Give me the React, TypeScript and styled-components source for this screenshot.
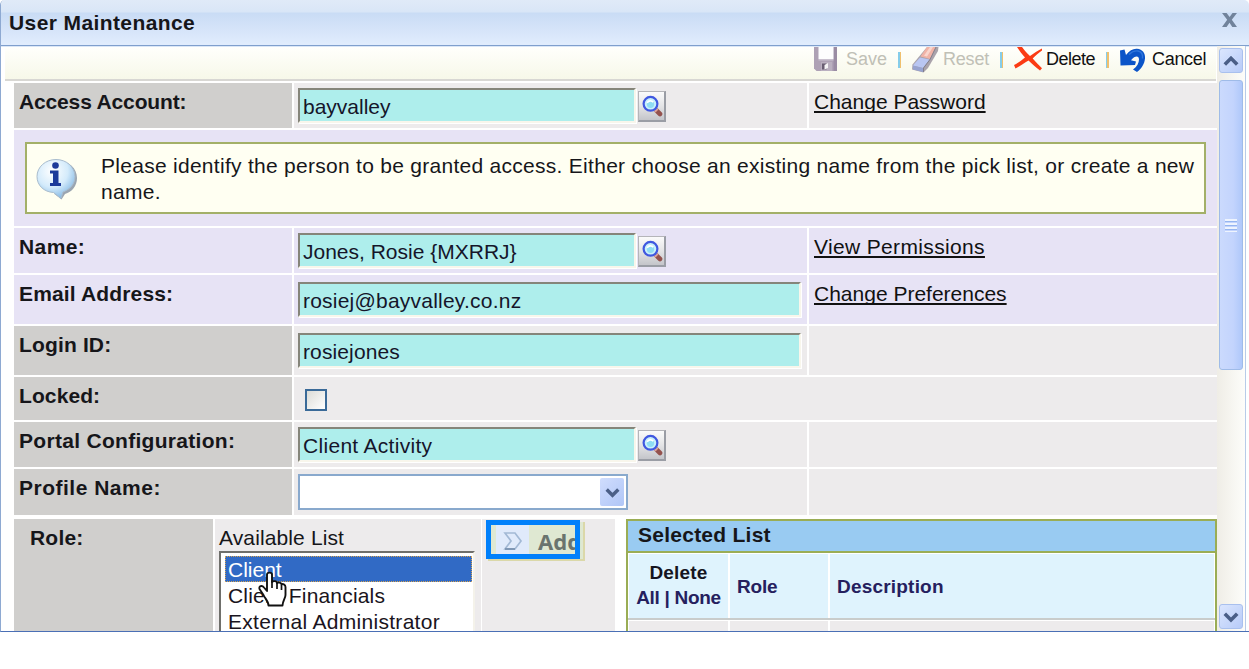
import React from 'react';
import styled, { createGlobalStyle } from 'styled-components';

const GlobalStyle = createGlobalStyle`
  * { box-sizing: border-box; }
  body {
    margin: 0;
    background: #fff;
    font-family: 'Liberation Sans', Arial, sans-serif;
    font-size: 21px;
    line-height: 24px;
    color: #16161a;
    overflow: hidden;
  }
`;

const Window = styled.div`
  width: 1249px;
  height: 632px;
  display: flex;
  flex-direction: column;
  background: #fff;
  border-left: 1px solid #8ea9d2;
  border-bottom: 1px solid #4a6fb5;
  border-radius: 5px 5px 0 0;
  overflow: hidden;
`;

const TitleBar = styled.header`
  flex: none;
  height: 46px;
  display: flex;
  align-items: center;
  justify-content: space-between;
  padding: 0 12px 1px 8px;
  border-bottom: 1px solid #7f9fcd;
  background: linear-gradient(#e0eaf8 0, #d9e6f7 12px, #c9dcf5 13px, #d3e2f8 26px, #e0ecfd 44px);
  box-shadow: 0 1px 0 #dbe7f7;
`;

const Title = styled.h1`
  margin: 1px 0 0;
  font-size: 21px;
  font-weight: bold;
  letter-spacing: 0.4px;
`;

const CloseIcon = styled.svg`
  width: 15px;
  height: 14px;
  margin-top: -5px;
`;

const Body = styled.div`
  flex: 1;
  min-height: 0;
  display: flex;
  overflow: hidden;
`;

const Content = styled.main`
  width: 1216px;
  padding: 1px 0 0 4px;
  overflow: hidden;
`;

const Toolbar = styled.nav`
  width: 1211px;
  height: 34px;
  display: flex;
  align-items: flex-start;
  padding-left: 809px;
  background: linear-gradient(#fffffc, #f7f8e9);
  border-bottom: 2px solid #d8d7d3;
`;

const Action = styled.div<{ $width: number; $gap: number; $muted?: boolean; $spacing?: number }>`
  flex: none;
  width: ${(p) => p.$width}px;
  display: flex;
  gap: ${(p) => p.$gap}px;
  font-size: 18px;
  line-height: 24px;
  letter-spacing: ${(p) => p.$spacing ?? 0}px;
  color: ${(p) => (p.$muted ? '#c0c0b6' : '#111')};
  white-space: nowrap;
`;

const ToolIcon = styled.svg`
  flex: none;
  height: 26px;
`;

const Divider = styled.span`
  flex: none;
  width: 3px;
  height: 16px;
  margin-top: 5px;
  background: linear-gradient(90deg, #86cdea 0 50%, #f0c06e 50%);
`;

const Form = styled.div`
  width: 1203px;
  margin: 2px 0 0 9px;
  display: flex;
  flex-direction: column;
  gap: 2px;
`;

type Tone = 'lavender' | 'grey';

const Row = styled.div<{ $height: number }>`
  flex: none;
  height: ${(p) => p.$height}px;
  display: flex;
  gap: 2px;
`;

const Label = styled.div<{ $tone: Tone; $spacing: number; $top: number }>`
  width: 278px;
  padding: ${(p) => p.$top}px 0 0 5px;
  font-weight: bold;
  letter-spacing: ${(p) => p.$spacing}px;
  background: ${(p) => (p.$tone === 'lavender' ? '#e7e3f5' : '#d0cfcd')};
`;

const Value = styled.div<{ $tone: Tone; $top: number; $wide?: boolean }>`
  width: ${(p) => (p.$wide ? 923 : 513)}px;
  display: flex;
  align-items: flex-start;
  padding: ${(p) => p.$top}px 0 0 4px;
  background: ${(p) => (p.$tone === 'lavender' ? '#e7e3f5' : '#edebec')};
`;

const LinkCell = styled.div<{ $tone: Tone }>`
  width: 408px;
  padding: 7px 0 0 5px;
  background: ${(p) => (p.$tone === 'lavender' ? '#e7e3f5' : '#edebec')};
`;

const Link = styled.a<{ $spacing: number }>`
  color: #111;
  letter-spacing: ${(p) => p.$spacing}px;
  text-decoration: underline;
  text-decoration-thickness: 1.5px;
  text-underline-offset: 2px;
  text-decoration-skip-ink: none;
`;

const Field = styled.div<{ $width: number; $spacing: number }>`
  width: ${(p) => p.$width}px;
  height: 35px;
  padding: 5px 0 0 3px;
  border: 2px solid;
  border-color: #85857a #f8f6ec #f8f6ec #85857a;
  background: #aeeeec;
  box-shadow: 1px 1px 0 #fff;
  line-height: 24px;
  letter-spacing: ${(p) => p.$spacing}px;
  color: #15152a;
  white-space: nowrap;
`;

const LookupButton = styled.button`
  width: 28px;
  height: 31px;
  margin: 3px 0 0 2px;
  padding: 0;
  display: flex;
  align-items: center;
  justify-content: center;
  border: 1px solid #b5b5b9;
  border-right: 2px solid #9a9da5;
  border-bottom: 2px solid #9a9da5;
  background: linear-gradient(#fbfbfb, #e4e4e6 50%, #c4c5ca);
`;

const CheckBox = styled.span`
  width: 22px;
  height: 22px;
  margin-left: 7px;
  border: 2px solid #3a6a98;
  background: linear-gradient(135deg, #dcdcd7, #fff);
`;

const Select = styled.div`
  width: 330px;
  height: 36px;
  display: flex;
  justify-content: flex-end;
  padding: 2px;
  border: 2px solid #89a9cd;
  background: #fff;
`;

const SelectArrow = styled.span`
  width: 24px;
  height: 28px;
  display: flex;
  align-items: center;
  justify-content: center;
  border-radius: 2px;
  background: linear-gradient(135deg, #d0ddfd, #b0c6f7);
`;

const NoticeRow = styled.div`
  height: 96px;
  padding: 12px 11px;
  background: #e7e3f5;
`;

const Notice = styled.div`
  height: 72px;
  display: flex;
  border: 2px solid #a3b068;
  background: #fffff2;
`;

const NoticeIcon = styled.svg`
  flex: none;
  width: 42px;
  height: 44px;
  margin: 14px 0 0 9px;
`;

const NoticeText = styled.p`
  margin: 9px 0 0 23px;
  line-height: 26px;
  letter-spacing: 0.28px;
  white-space: nowrap;
`;

const RoleRow = styled.div`
  height: 120px;
  margin-top: 2px;
  display: flex;
`;

const RoleLabel = styled.div`
  width: 199px;
  padding: 7px 0 0 16px;
  margin-right: 2px;
  background: #d0cfcd;
  font-weight: bold;
  letter-spacing: 0.2px;
`;

const Available = styled.div`
  width: 266px;
  padding: 7px 0 0 4px;
  letter-spacing: 0.12px;
  background: #edebec;
`;

const ListBox = styled.div`
  position: relative;
  width: 256px;
  height: 100px;
  margin-top: 1px;
  padding: 3px 2px 0 4px;
  border: 2px solid #f4f2ea;
  border-top-color: #6f6f6b;
  border-left-color: #6f6f6b;
  background: #fff;
`;

const Option = styled.div<{ $selected?: boolean; $spacing: number }>`
  width: 247px;
  height: 26px;
  padding-left: 3px;
  line-height: 27px;
  letter-spacing: ${(p) => p.$spacing}px;
  color: ${(p) => (p.$selected ? '#fff' : '#1a1420')};
  background: ${(p) => (p.$selected ? '#316ac5' : 'transparent')};
  outline: ${(p) => (p.$selected ? '1px dotted #d8a450' : 'none')};
  outline-offset: -1px;
  white-space: nowrap;
`;

const HandCursor = styled.svg`
  position: absolute;
  left: 36px;
  top: 18px;
  width: 30px;
  height: 38px;
`;

const AddCell = styled.div`
  width: 133px;
  margin-left: 1px;
  padding: 3px 0 0 6px;
  background: #edebec;
`;

const AddButton = styled.div`
  position: relative;
  width: 97px;
  height: 39px;
  display: flex;
  padding-left: 8px;
  background: #dfe8d2;
  border: solid #dbd8a9;
  border-width: 0 2px 2px 0;
  font: bold 22px/38px 'Noto Sans', sans-serif;
  color: #6a746e;
`;

const AddIcon = styled.span`
  width: 33px;
  display: flex;
  align-items: center;
  justify-content: center;
  margin-right: 9px;
  background: #e0eafb;
`;

const Highlight = styled.span`
  position: absolute;
  left: -2px;
  top: -2px;
  width: 94px;
  height: 39px;
  border: 5px solid #0080fb;
`;

const SelectedList = styled.section`
  width: 591px;
  margin-left: auto;
  border: solid #9aad55;
  border-width: 2px 2px 0 2px;
  background: #fff;
`;

const SelectedTitle = styled.h2`
  height: 32px;
  margin: 0;
  padding: 2px 0 0 10px;
  border-bottom: 2px solid #9aad55;
  background: #99cbf2;
  font-size: 21px;
  line-height: 24px;
  letter-spacing: 0.25px;
`;

const HeadRow = styled.div`
  height: 67px;
  display: grid;
  grid-template-columns: 99px 98px 1fr;
  gap: 2px;
  padding: 1px 1px 0 1px;
  border-bottom: 2px solid #c9cccb;
`;

const HeadCell = styled.div<{ $center?: boolean; $spacing: number }>`
  display: flex;
  flex-direction: column;
  justify-content: center;
  padding: ${(p) => (p.$center ? '0 0 3px' : '0 0 0 7px')};
  text-align: ${(p) => (p.$center ? 'center' : 'left')};
  background: #dff3fd;
  font-size: 19px;
  font-weight: bold;
  line-height: 25px;
  letter-spacing: ${(p) => p.$spacing}px;
  color: #25205e;
  white-space: nowrap;
`;

const HeadText = styled.span<{ $dark?: boolean; $spacing: number }>`
  color: ${(p) => (p.$dark ? '#15151f' : '#25205e')};
  letter-spacing: ${(p) => p.$spacing}px;
`;

const EmptyRow = styled.div`
  height: 20px;
  display: grid;
  grid-template-columns: 99px 98px 1fr;
  gap: 2px;
  padding: 1px 1px 0;
`;

const EmptyCell = styled.div`
  background: #edebec;
`;

const ScrollBar = styled.aside`
  width: 29px;
  display: flex;
  flex-direction: column;
  align-items: center;
  padding: 2px 0;
  border-right: 1px solid #b8cbe8;
  background: linear-gradient(90deg, #efede6, #fdfdfa);
`;

const ScrollButton = styled.div`
  flex: none;
  width: 24px;
  height: 25px;
  display: flex;
  align-items: center;
  justify-content: center;
  border: 1px solid #a9c0ee;
  border-radius: 3px;
  background: linear-gradient(135deg, #dbe6fe, #b7cbf8);
`;

const Thumb = styled.div`
  flex: none;
  width: 24px;
  height: 290px;
  margin: 7px 0 auto;
  display: flex;
  align-items: center;
  justify-content: center;
  border: 1px solid #9fbbe8;
  border-radius: 3px;
  background: linear-gradient(90deg, #cbdafd, #c3d4fd 60%, #afc8fa);
`;

const Grip = styled.span`
  width: 12px;
  height: 13px;
  background: repeating-linear-gradient(#eef4fe 0 2px, #95b5f0 2px 3px, #c3d4fd 3px 4px);
`;

function Chevron({ up, size = 16 }: { up?: boolean; size?: number }) {
  return (
    <svg width={size} height={size} viewBox="0 0 16 16" fill="none" stroke="#4b5f87" strokeWidth="3.6">
      <path d={up ? 'M1.8 11.5 8 5.3l6.2 6.2' : 'M1.8 4.8 8 11l6.2-6.2'} />
    </svg>
  );
}

function Lookup() {
  return (
    <LookupButton aria-label="Look up">
      <svg width="22" height="24" viewBox="0 0 22 24">
        <path d="M15.500 16.500l3.500 3.500" stroke="#94524e" strokeWidth="4.6" strokeLinecap="round" />
        <path d="M13.600 14.600l2.400 2.400" stroke="#dda49a" strokeWidth="4" />
        <circle cx="9.500" cy="9.800" r="6.900" fill="#c8f0fb" stroke="#4058e0" strokeWidth="2.2" />
        <circle cx="9.500" cy="10.300" r="3.600" fill="#8fdcf4" />
        <path d="M6.200 8.800a3.600 3.600 0 0 1 6-.6" stroke="#fff" strokeWidth="1.6" fill="none" />
      </svg>
    </LookupButton>
  );
}

interface FieldRowProps {
  label: string;
  labelSpacing?: number;
  height: number;
  tone?: Tone;
  value: string;
  spacing?: number;
  lookup?: boolean;
  top?: number;
  link?: string;
  linkSpacing?: number;
}

function FieldRow({ label, labelSpacing = 0, height, tone = 'grey', value, spacing = 0, lookup, top = 5, link, linkSpacing = 0 }: FieldRowProps) {
  return (
    <Row $height={height}>
      <Label $tone={tone} $spacing={labelSpacing} $top={7}>{label}</Label>
      <Value $tone={tone} $top={top}>
        <Field $width={lookup ? 338 : 503} $spacing={spacing}>{value}</Field>
        {lookup && <Lookup />}
      </Value>
      <LinkCell $tone={tone}>{link && <Link $spacing={linkSpacing}>{link}</Link>}</LinkCell>
    </Row>
  );
}

export default function App() {
  return (
    <>
      <GlobalStyle />
      <Window>
        <TitleBar>
          <Title>User Maintenance</Title>
          <CloseIcon viewBox="0 0 15 14" preserveAspectRatio="none">
            <path d="M0 0h4.600l3 4L10.500 0H15L9.800 6.700 15 14h-4.700L7.500 9.800 4.600 14H0l5.200-7.300z" fill="#71839b" />
          </CloseIcon>
        </TitleBar>
        <Body>
          <Content>
            <Toolbar>
              <Action $width={84} $gap={8} $muted>
                <ToolIcon width="24" viewBox="0 0 24 26">
                  <path d="M0 0h23v24H2.500L0 21.500z" fill="#aea1b5" />
                  <path d="M19.500 0H23v24h-3.500z" fill="#9a8ca4" />
                  <path d="M4.500 0h15v12h-15z" fill="#fdfdfe" />
                  <path d="M4.500 12h15v1.500h-15z" fill="#c9c0cf" />
                  <path d="M7 15h11v9H7z" fill="#bab0c0" />
                  <path d="M8 16.500h4.500v6H8z" fill="#685d72" />
                  <path d="M10.500 18l3.500-2v5l-3.500 1.500z" fill="#f5f4f6" />
                </ToolIcon>
                Save
              </Action>
              <Divider />
              <Action $width={99} $gap={4} $muted $spacing={-0.2}>
                <ToolIcon width="38" viewBox="-11 0 38 26">
                  <path d="M15 0h11.500l-.5 4-10 17-4.500 4.500L0 22.500l.5-5z" fill="#aaa3ab" />
                  <path d="M15 0h9l-6 12-9.500-2.500z" fill="#f1b3a6" />
                  <path d="M18 0h3l-6 9.500-3-.7z" fill="#f9d6cd" />
                  <path d="M8 10.500l9.500 2L11 21 .8 18.500z" fill="#b9c6f2" />
                  <path d="M.8 18.500L11 21v4L1 22.500z" fill="#97a3d0" />
                  <path d="M24 0l-6 12.500L11.500 21v4" stroke="#7d7a88" strokeWidth=".9" fill="none" />
                </ToolIcon>
                Reset
              </Action>
              <Divider />
              <Action $width={103} $gap={4} $spacing={-0.5}>
                <ToolIcon width="39" viewBox="-9 0 39 26">
                  <path d="M5 0h5c3 4 5 6.500 8 9 4-3 7.500-5 12-7.500l.5 1.500c-4 3-7 5.500-9.800 8.500 3 3.500 6 6.500 9.300 9.800L28 23.500c-4.500-3.500-8-6.500-11.500-10C12.500 16 8.500 18.500 3.500 21.500L2 18c4-2 7.500-4.500 11-7.500C10 7 7.500 4 5 0z" fill="#fb3b14" />
                </ToolIcon>
                Delete
              </Action>
              <Divider />
              <Action $width={100} $gap={6} $spacing={-0.3}>
                <ToolIcon width="37" viewBox="-11 0 37 26">
                  <path d="M0 3.500L4.500 2.500 6 8C9.500 3.500 13 1.500 17 1.800c5.500.4 8.500 4.500 8 9.700-.5 5.500-3.500 10-8 13.500l-4-2.500c4-3 6-6.500 6-10 0-3.500-3.500-4.500-8 .8l5 1.200L15 18 .5 18.500z" fill="#0c55c8" />
                  <path d="M9 7.500c3-3 6-4 9-3.500 3.500.8 5 4 4.500 7.500" stroke="#2f76dc" strokeWidth="1.400" fill="none" />
                </ToolIcon>
                Cancel
              </Action>
            </Toolbar>

            <Form>
              <FieldRow label="Access Account:" labelSpacing={-0.15} height={45} value="bayvalley" lookup link="Change Password" />
              <NoticeRow>
                <Notice>
                  <NoticeIcon viewBox="0 0 42 44">
                    <defs>
                      <radialGradient id="bubble" cx="0.4" cy="0.3" r="0.75">
                        <stop offset="0" stopColor="#ffffff" />
                        <stop offset="0.55" stopColor="#d4ebfb" />
                        <stop offset="1" stopColor="#7db4e2" />
                      </radialGradient>
                    </defs>
                    <path d="M22 3C33 3 41 10 41 20c0 8-5 14-12 16l-3.500 5.500L18.500 36z" fill="#6f7f95" opacity=".7" />
                    <path d="M20 1.500C30.500 1.500 39 9 39 18.500c0 7.500-5 13-12 15.500l-2 6.500-7.500-6C8 34 1 27.500 1 18.500 1 9 9.500 1.500 20 1.500z" fill="url(#bubble)" stroke="#a9bccd" />
                    <circle cx="19.500" cy="7.500" r="3.300" fill="#1c3a9a" />
                    <path d="M14 12.500h8.500v12.500H25V28H14v-3h3V15.500h-3z" fill="#1c3a9a" />
                  </NoticeIcon>
                  <NoticeText>
                    Please identify the person to be granted access. Either choose an existing name from the pick list, or create a new
                    <br />
                    name.
                  </NoticeText>
                </Notice>
              </NoticeRow>
              <FieldRow label="Name:" labelSpacing={0.4} height={45} tone="lavender" value="Jones, Rosie {MXRRJ}" lookup link="View Permissions" linkSpacing={0.35} />
              <FieldRow label="Email Address:" labelSpacing={0.15} height={49} tone="lavender" top={7} value="rosiej@bayvalley.co.nz" spacing={0.22} link="Change Preferences" />
              <FieldRow label="Login ID:" labelSpacing={0.15} height={49} top={7} value="rosiejones" spacing={0.12} />
              <Row $height={43}>
                <Label $tone="grey" $spacing={0.1} $top={7}>Locked:</Label>
                <Value $tone="grey" $top={12} $wide><CheckBox /></Value>
              </Row>
              <FieldRow label="Portal Configuration:" labelSpacing={0.3} height={45} value="Client Activity" spacing={0.3} lookup />
              <Row $height={46}>
                <Label $tone="grey" $spacing={0.5} $top={7}>Profile Name:</Label>
                <Value $tone="grey" $top={5}>
                  <Select><SelectArrow><Chevron size={15} /></SelectArrow></Select>
                </Value>
                <LinkCell $tone="grey" />
              </Row>
              <RoleRow>
                <RoleLabel>Role:</RoleLabel>
                <Available>
                  Available List
                  <ListBox>
                    <Option $selected $spacing={0}>Client</Option>
                    <Option $spacing={0.18}>Client Financials</Option>
                    <Option $spacing={0.3}>External Administrator</Option>
                    <HandCursor viewBox="0 0 30 38">
                      <path
                        d="M10 3.500c0-2.500 5-2.500 5 0V11c1-1.500 5-1 5 1 1-1 4.500-.5 4.500 1.500 1-1 4 0 4 2.500v8c0 3-2.500 5-3 10.500H11.500c0-4-3.500-7-5-10.500L2.500 18c-1-3 2.500-4 4.500-1.500L10 20z"
                        fill="#fff" stroke="#111" strokeWidth="1.900" strokeLinejoin="round"
                      />
                      <path d="M15 10v7M20 12v6M24.500 14v5" stroke="#111" strokeWidth="1.700" />
                    </HandCursor>
                  </ListBox>
                </Available>
                <AddCell>
                  <AddButton>
                    <AddIcon>
                      <svg width="20" height="20" viewBox="0 0 20 20" fill="none" stroke="#a3b9d5" strokeWidth="1.700">
                        <path d="M2 2h10l6 8-6 8H2l6-8z" />
                        <path d="M2 18h10" stroke="#7f97b5" strokeWidth="2" />
                      </svg>
                    </AddIcon>
                    Add
                    <Highlight />
                  </AddButton>
                </AddCell>
                <SelectedList>
                  <SelectedTitle>Selected List</SelectedTitle>
                  <HeadRow>
                    <HeadCell $center $spacing={0}>
                      <HeadText $dark $spacing={0.2}>Delete</HeadText>
                      <HeadText $spacing={-0.3}>All | None</HeadText>
                    </HeadCell>
                    <HeadCell $spacing={-0.2}>Role</HeadCell>
                    <HeadCell $spacing={0.2}>Description</HeadCell>
                  </HeadRow>
                  <EmptyRow><EmptyCell /><EmptyCell /><EmptyCell /></EmptyRow>
                </SelectedList>
              </RoleRow>
            </Form>
          </Content>
          <ScrollBar>
            <ScrollButton><Chevron up /></ScrollButton>
            <Thumb><Grip /></Thumb>
            <ScrollButton><Chevron /></ScrollButton>
          </ScrollBar>
        </Body>
      </Window>
    </>
  );
}
